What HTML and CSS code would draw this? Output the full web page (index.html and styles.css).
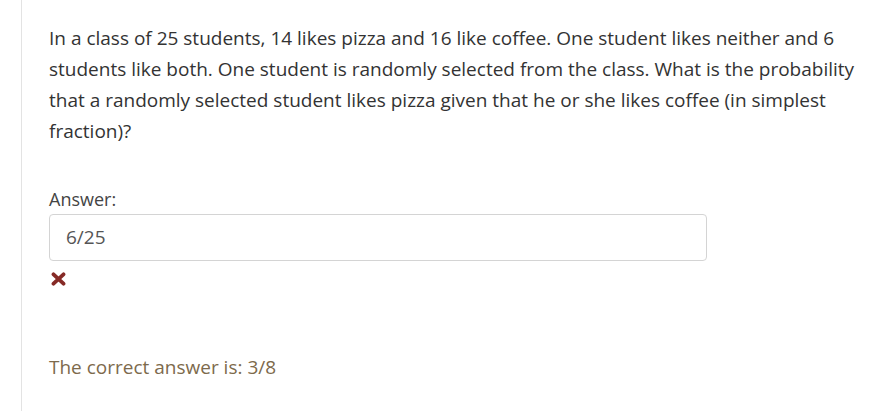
FILE: index.html
```html
<!DOCTYPE html>
<html>
<head>
<meta charset="utf-8">
<link rel="stylesheet" href="styles.css">
</head>
<body>
<div class="panel">
  <div class="content">
    <p class="question">In a class of 25 students, 14 likes pizza and 16 like coffee. One student likes neither and 6 students like both. One student is randomly selected from the class. What is the probability that a randomly selected student likes pizza given that he or she likes coffee (in simplest fraction)?</p>
    <div class="answer-label">Answer:</div>
    <div class="answer-box">6/25</div>
    <div class="mark">
      <svg width="15" height="14" viewBox="0 0 15 14"><path d="M2.5 2.3 L12.5 11.7 M12.5 2.3 L2.5 11.7" stroke="#862a26" stroke-width="3.8" stroke-linecap="round"/></svg>
    </div>
    <div class="correct">The correct answer is: 3/8</div>
  </div>
</div>
</body>
</html>
```
FILE: styles.css
```css
html, body {
  margin: 0;
  padding: 0;
  background: #fff;
}
body {
  font-family: "Open Sans", "Noto Sans", sans-serif;
  color: #333;
}
.panel {
  margin-left: 21px;
  border-left: 1px solid #e3e3e3;
  min-height: 411px;
  box-sizing: border-box;
  padding: 23px 10px 0 27px;
}
.content {
  width: 812px;
}
.question {
  margin: 0;
  font-size: 19px;
  line-height: 31px;
}
.answer-label {
  margin-top: 37px;
  font-size: 18px;
  line-height: 31px;
  color: #444;
}
.answer-box {
  margin-top: -1px;
  width: 658px;
  height: 47px;
  box-sizing: border-box;
  border: 1px solid #d4d4d4;
  border-radius: 4px;
  padding: 0 16px;
  font-size: 19px;
  line-height: 45px;
  color: #555;
}
.mark {
  height: 14px;
  margin-top: 11px;
  padding-left: 2px;
}
.mark svg { display: block; }
.correct {
  margin-top: 66px;
  font-size: 19px;
  line-height: 31px;
  color: #7d6a4c;
}
```
